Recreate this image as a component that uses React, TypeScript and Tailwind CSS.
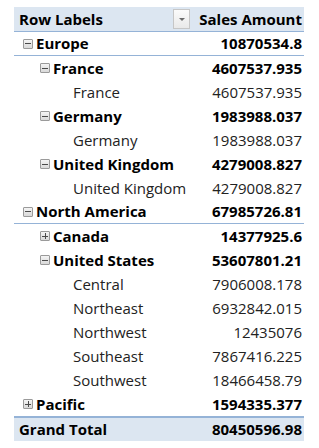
const rows: { label: string; value: string; level: number; bold?: boolean; icon?: "minus" | "plus"; line?: boolean }[] = [
  { label: "Europe", value: "10870534.8", level: 0, bold: true, icon: "minus", line: true },
  { label: "France", value: "4607537.935", level: 1, bold: true, icon: "minus" },
  { label: "France", value: "4607537.935", level: 2 },
  { label: "Germany", value: "1983988.037", level: 1, bold: true, icon: "minus" },
  { label: "Germany", value: "1983988.037", level: 2 },
  { label: "United Kingdom", value: "4279008.827", level: 1, bold: true, icon: "minus" },
  { label: "United Kingdom", value: "4279008.827", level: 2 },
  { label: "North America", value: "67985726.81", level: 0, bold: true, icon: "minus", line: true },
  { label: "Canada", value: "14377925.6", level: 1, bold: true, icon: "plus" },
  { label: "United States", value: "53607801.21", level: 1, bold: true, icon: "minus" },
  { label: "Central", value: "7906008.178", level: 2 },
  { label: "Northeast", value: "6932842.015", level: 2 },
  { label: "Northwest", value: "12435076", level: 2 },
  { label: "Southeast", value: "7867416.225", level: 2 },
  { label: "Southwest", value: "18466458.79", level: 2 },
  { label: "Pacific", value: "1594335.377", level: 0, bold: true, icon: "plus" },
]

const indent = ["pl-[9px]", "pl-[26px]", "pl-[59px]"]

function Toggle({ kind }: { kind: "minus" | "plus" }) {
  return (
    <span className="relative mr-[3px] inline-block h-[10px] w-[10px] shrink-0 rounded-[1px] border border-[#9a9a9a] bg-gradient-to-b from-[#f4f4f4] to-[#d9d9d9]">
      <span className="absolute left-[1px] top-[3.5px] h-[1px] w-[6px] bg-[#4a4a4a]" />
      {kind === "plus" && <span className="absolute left-[3.5px] top-[1px] h-[6px] w-[1px] bg-[#4a4a4a]" />}
    </span>
  )
}

export default function App() {
  return (
    <div className="h-[448px] w-[319px] bg-white pt-[7px] pl-[14px] font-['Open_Sans',sans-serif] text-[15px] text-[#222]">
      <div className="w-[290px]">
        <div className="flex h-[25px] items-center border-b border-[#95b3d7] bg-[#dce6f1] font-bold text-black">
          <div className="flex w-[179px] items-center justify-between pl-[5px] pr-[3px]">
            <span>Row Labels</span>
            <span className="flex h-[20px] w-[17px] items-center justify-center border border-[#c6c6c6] bg-gradient-to-b from-[#fbfbfb] to-[#e9e9e9]">
              <span className="h-0 w-0 border-x-[3px] border-t-[3px] border-x-transparent border-t-[#6b6b6b]" />
            </span>
          </div>
          <div className="flex-1 pr-[2px] text-right">Sales Amount</div>
        </div>
        {rows.map((r, i) => (
          <div
            key={i}
            className={`flex h-[24px] items-center ${r.line ? "border-b border-[#95b3d7]" : ""} ${r.bold ? "font-bold text-black" : ""}`}
          >
            <div className={`flex w-[179px] items-center ${indent[r.level]}`}>
              {r.icon && <Toggle kind={r.icon} />}
              <span>{r.label}</span>
            </div>
            <div className="flex-1 pr-[2px] text-right">{r.value}</div>
          </div>
        ))}
        <div className="flex h-[25px] items-center border-t-2 border-[#95b3d7] bg-[#dce6f1] font-bold text-black">
          <div className="w-[179px] pl-[5px]">Grand Total</div>
          <div className="flex-1 pr-[2px] text-right">80450596.98</div>
        </div>
      </div>
    </div>
  )
}
